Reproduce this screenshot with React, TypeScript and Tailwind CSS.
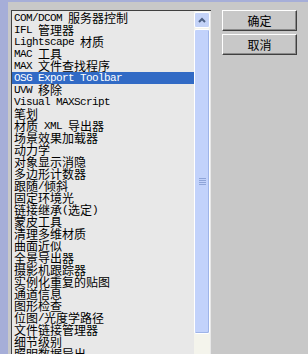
const items = [
  "COM/DCOM 服务器控制",
  "IFL 管理器",
  "Lightscape 材质",
  "MAC 工具",
  "MAX 文件查找程序",
  "OSG Export Toolbar",
  "UVW 移除",
  "Visual MAXScript",
  "笔划",
  "材质 XML 导出器",
  "场景效果加载器",
  "动力学",
  "对象显示消隐",
  "多边形计数器",
  "跟随/倾斜",
  "固定环境光",
  "链接继承(选定)",
  "蒙皮工具",
  "清理多维材质",
  "曲面近似",
  "全景导出器",
  "摄影机跟踪器",
  "实例化重复的贴图",
  "通道信息",
  "图形检查",
  "位图/光度学路径",
  "文件链接管理器",
  "细节级别",
  "照明数据导出",
];

// split into latin / cjk runs so each gets its own width
function Label({ text }: { text: string }) {
  const runs = text.match(/[\u3000-\u9fff]+|[^\u3000-\u9fff]+/g) || [];
  return (
    <>
      {runs.map((r, i) =>
        /[\u3000-\u9fff]/.test(r[0]) ? (
          <span
            key={i}
            className="inline-block h-[12px] leading-[12px] text-[12px] [font-family:'Noto_Sans_CJK_SC',sans-serif]"
          >
            {r}
          </span>
        ) : (
          <span
            key={i}
            className="inline-block h-[12px] leading-[12px] text-[11px] tracking-[-0.6px] whitespace-pre [font-family:'Liberation_Mono',monospace]"
          >
            {r}
          </span>
        )
      )}
    </>
  );
}

function Button({ text }: { text: string }) {
  return (
    <div className="w-[75px] h-[21px] border border-t-white border-l-white border-r-[#404040] border-b-[#404040] bg-[#c8c8c8] flex items-center justify-center text-[12px] leading-[12px] text-black [font-family:'Noto_Sans_CJK_SC',sans-serif] shadow-[inset_-1px_-1px_0_#8a8a8a]">
      {text}
    </div>
  );
}

export default function App() {
  return (
    <div className="w-[308px] h-[354px] overflow-hidden bg-[#c8c8c8] flex flex-col">
      <div className="h-[2px] bg-[#a6aed8]" />
      <div className="flex flex-1 min-h-0">
        <div className="w-[8px] bg-[#a6aed8]" />
        <div className="flex flex-1 pl-[3px] pt-[8px]">
          {/* List box */}
          <div className="w-[200px] h-[360px] flex border-l border-t border-[#404040] border-r-[#f4f4f4] bg-[#e8e8e8]">
            <div className="w-[182px] pt-[1px] flex flex-col">
              {items.map((it, i) => (
                <div
                  key={it}
                  className={
                    "h-[12px] leading-[12px] pl-[2px] whitespace-nowrap flex items-center " +
                    (i === 5 ? "bg-[#316ac5] text-white" : "text-black")
                  }
                >
                  <Label text={it} />
                </div>
              ))}
            </div>
            {/* Scrollbar */}
            <div className="w-[16px] flex flex-col bg-[#f4f4ec]">
              <div className="h-[16px] mt-[1px] rounded-[2px] border border-white bg-[#c4d3f8] flex items-center justify-center">
                <svg width="8" height="6" viewBox="0 0 8 6">
                  <path d="M1 5 L4 2 L7 5" stroke="#4d6185" strokeWidth="2" fill="none" />
                </svg>
              </div>
              <div className="h-[305px] mt-[1px] rounded-[2px] border border-[#ffffff] bg-[#c2d2fb] shadow-[inset_-1px_-1px_0_#9eb4e8] flex items-center justify-center">
                <div className="flex flex-col gap-[1px]">
                  <div className="w-[7px] h-[1px] bg-[#8ea4d8]" />
                  <div className="w-[7px] h-[1px] bg-[#8ea4d8]" />
                  <div className="w-[7px] h-[1px] bg-[#8ea4d8]" />
                  <div className="w-[7px] h-[1px] bg-[#8ea4d8]" />
                </div>
              </div>
            </div>
          </div>
          {/* Buttons */}
          <div className="ml-[11px] flex flex-col gap-[3px]">
            <Button text="确定" />
            <Button text="取消" />
          </div>
        </div>
      </div>
    </div>
  );
}
